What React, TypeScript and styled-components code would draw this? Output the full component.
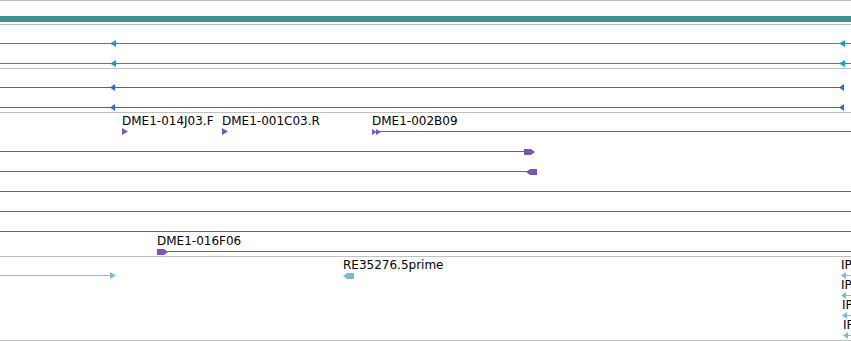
import React from "react";
import styled, { createGlobalStyle } from "styled-components";

const GlobalStyle = createGlobalStyle`
  html, body { margin: 0; padding: 0; background: #fff; }
  body { font-family: "DejaVu Sans", "Liberation Sans", sans-serif; }
`;

const Browser = styled.div`
  width: 851px;
  height: 341px;
  display: flex;
  flex-direction: column;
  overflow: hidden;
  background: #fff;
`;

const Rule = styled.div`
  height: 1px;
  flex-shrink: 0;
  background: #c0c0c0;
`;

const Track = styled.div<{ $h: number }>`
  position: relative;
  height: ${(p) => p.$h}px;
  flex-shrink: 0;
`;

const Bar = styled.div<{ $top: number; $color: string }>`
  position: absolute;
  left: 0;
  right: 0;
  top: ${(p) => p.$top}px;
  height: 6px;
  background: ${(p) => p.$color};
`;

const Line = styled.div<{ $top: number; $left: number; $width: number; $color: string }>`
  position: absolute;
  top: ${(p) => p.$top}px;
  left: ${(p) => p.$left}px;
  width: ${(p) => p.$width}px;
  height: 1px;
  background: ${(p) => p.$color};
`;

const Label = styled.span<{ $top: number; $left: number }>`
  position: absolute;
  top: ${(p) => p.$top}px;
  left: ${(p) => p.$left}px;
  font-size: 12px;
  line-height: 14px;
  color: #000;
  white-space: nowrap;
`;

const GlyphSvg = styled.svg<{ $top: number; $left: number }>`
  position: absolute;
  top: ${(p) => p.$top}px;
  left: ${(p) => p.$left}px;
  overflow: visible;
`;

type Kind = "left" | "right" | "double" | "blockRight" | "blockLeft" | "slimLeft";

const shapes: Record<Kind, { w: number; h: number; pts: string[] }> = {
  left: { w: 6, h: 7, pts: ["0,3.5 6,0 6,7"] },
  slimLeft: { w: 5, h: 7, pts: ["0,3.5 5,0 5,7"] },
  right: { w: 6, h: 7, pts: ["0,0 6,3.5 0,7"] },
  double: { w: 9, h: 6, pts: ["0,0 4.5,3 0,6", "4,0 9,3 4,6"] },
  blockRight: { w: 11, h: 6, pts: ["0,0 7,0 11,3 7,6 0,6"] },
  blockLeft: { w: 11, h: 6, pts: ["0,3 4,0 11,0 11,6 4,6"] },
};

const Glyph: React.FC<{ kind: Kind; x: number; y: number; color: string }> = ({ kind, x, y, color }) => {
  const s = shapes[kind];
  return (
    <GlyphSvg $top={y + 0.5 - s.h / 2} $left={x} width={s.w} height={s.h} viewBox={`0 0 ${s.w} ${s.h}`}>
      {s.pts.map((p, i) => (
        <polygon key={i} points={p} fill={color} />
      ))}
    </GlyphSvg>
  );
};

type Feature = {
  y: number;
  x1: number;
  x2: number;
  color: string;
  glyphColor: string;
  glyphs?: { kind: Kind; x: number }[];
  label?: { text: string; x: number };
};

const FeatureView: React.FC<{ f: Feature }> = ({ f }) => (
  <>
    {f.x2 > f.x1 && <Line $top={f.y} $left={f.x1} $width={f.x2 - f.x1} $color={f.color} />}
    {f.glyphs?.map((g, i) => (
      <Glyph key={i} kind={g.kind} x={g.x} y={f.y} color={f.glyphColor} />
    ))}
    {f.label && (
      <Label $top={f.y - 17} $left={f.label.x}>
        {f.label.text}
      </Label>
    )}
  </>
);

const TEAL = "#1b92ae";
const TEAL_G = "#14a2c4";
const BLUE = "#3a68c4";
const BLUE_G = "#3366d6";
const PURPLE = "#7158a6";
const PURPLE_G = "#7a56b6";
const LBLUE = "#86bde0";
const LBLUE_G = "#7cb8e2";

const trackB: Feature[] = [
  { y: 18, x1: 0, x2: 851, color: TEAL, glyphColor: TEAL_G, glyphs: [{ kind: "left", x: 110 }, { kind: "left", x: 839 }] },
  { y: 38, x1: 0, x2: 851, color: TEAL, glyphColor: TEAL_G, glyphs: [{ kind: "left", x: 110 }, { kind: "left", x: 839 }] },
];

const trackC: Feature[] = [
  { y: 18, x1: 0, x2: 842, color: BLUE, glyphColor: BLUE_G, glyphs: [{ kind: "slimLeft", x: 110 }, { kind: "slimLeft", x: 839 }] },
  { y: 38, x1: 0, x2: 842, color: BLUE, glyphColor: BLUE_G, glyphs: [{ kind: "slimLeft", x: 110 }, { kind: "slimLeft", x: 839 }] },
];

const trackD: Feature[] = [
  { y: 18, x1: 0, x2: 0, color: PURPLE, glyphColor: PURPLE_G, glyphs: [{ kind: "right", x: 122 }], label: { text: "DME1-014J03.F", x: 122 } },
  { y: 18, x1: 0, x2: 0, color: PURPLE, glyphColor: PURPLE_G, glyphs: [{ kind: "right", x: 222 }], label: { text: "DME1-001C03.R", x: 222 } },
  { y: 18, x1: 380, x2: 851, color: PURPLE, glyphColor: PURPLE_G, glyphs: [{ kind: "double", x: 372 }], label: { text: "DME1-002B09", x: 372 } },
  { y: 38, x1: 0, x2: 526, color: PURPLE, glyphColor: PURPLE_G, glyphs: [{ kind: "blockRight", x: 524 }] },
  { y: 58, x1: 0, x2: 530, color: PURPLE, glyphColor: PURPLE_G, glyphs: [{ kind: "blockLeft", x: 526 }] },
  { y: 78, x1: 0, x2: 851, color: PURPLE, glyphColor: PURPLE_G },
  { y: 98, x1: 0, x2: 851, color: PURPLE, glyphColor: PURPLE_G },
  { y: 118, x1: 0, x2: 851, color: PURPLE, glyphColor: PURPLE_G },
  { y: 138, x1: 165, x2: 851, color: PURPLE, glyphColor: PURPLE_G, glyphs: [{ kind: "blockRight", x: 157 }], label: { text: "DME1-016F06", x: 157 } },
];

const trackE: Feature[] = [
  { y: 18, x1: 0, x2: 112, color: LBLUE, glyphColor: LBLUE_G, glyphs: [{ kind: "right", x: 110 }] },
  { y: 18, x1: 0, x2: 0, color: LBLUE, glyphColor: LBLUE_G, glyphs: [{ kind: "blockLeft", x: 343 }], label: { text: "RE35276.5prime", x: 343 } },
  { y: 18, x1: 845, x2: 851, color: LBLUE, glyphColor: LBLUE_G, glyphs: [{ kind: "slimLeft", x: 841 }], label: { text: "IP", x: 841 } },
  { y: 38, x1: 845, x2: 851, color: LBLUE, glyphColor: LBLUE_G, glyphs: [{ kind: "slimLeft", x: 841 }], label: { text: "IP", x: 841 } },
  { y: 58, x1: 846, x2: 851, color: LBLUE, glyphColor: LBLUE_G, glyphs: [{ kind: "slimLeft", x: 842 }], label: { text: "IP", x: 842 } },
  { y: 78, x1: 847, x2: 851, color: LBLUE, glyphColor: LBLUE_G, glyphs: [{ kind: "slimLeft", x: 843 }], label: { text: "IP", x: 843 } },
];

export default function App() {
  return (
    <>
      <GlobalStyle />
      <Browser>
        <Rule />
        <Track $h={23}>
          <Bar $top={15} $color="#3f9090" />
        </Track>
        <Rule />
        <Track $h={43}>
          {trackB.map((f, i) => (
            <FeatureView key={i} f={f} />
          ))}
        </Track>
        <Rule />
        <Track $h={43}>
          {trackC.map((f, i) => (
            <FeatureView key={i} f={f} />
          ))}
        </Track>
        <Rule />
        <Track $h={143}>
          {trackD.map((f, i) => (
            <FeatureView key={i} f={f} />
          ))}
        </Track>
        <Rule />
        <Track $h={83}>
          {trackE.map((f, i) => (
            <FeatureView key={i} f={f} />
          ))}
        </Track>
        <Rule />
      </Browser>
    </>
  );
}
